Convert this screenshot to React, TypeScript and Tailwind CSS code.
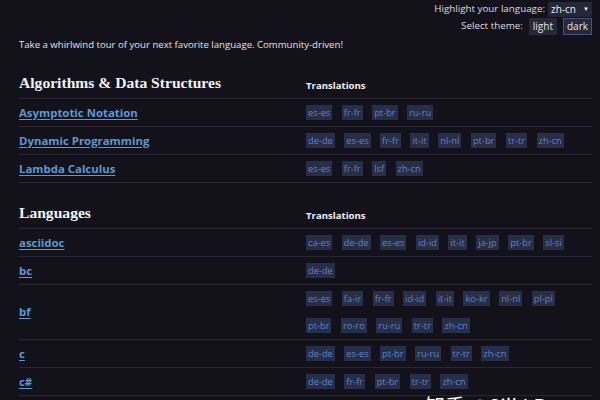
import React from "react";

type Row = { name: string; lines: string[][] };

const algorithms: Row[] = [
  { name: "Asymptotic Notation", lines: [["es-es", "fr-fr", "pt-br", "ru-ru"]] },
  {
    name: "Dynamic Programming",
    lines: [["de-de", "es-es", "fr-fr", "it-it", "nl-nl", "pt-br", "tr-tr", "zh-cn"]],
  },
  { name: "Lambda Calculus", lines: [["es-es", "fr-fr", "lsf", "zh-cn"]] },
];

const languages: Row[] = [
  {
    name: "asciidoc",
    lines: [["ca-es", "de-de", "es-es", "id-id", "it-it", "ja-jp", "pt-br", "sl-si"]],
  },
  { name: "bc", lines: [["de-de"]] },
  {
    name: "bf",
    lines: [
      ["es-es", "fa-ir", "fr-fr", "id-id", "it-it", "ko-kr", "nl-nl", "pl-pl"],
      ["pt-br", "ro-ro", "ru-ru", "tr-tr", "zh-cn"],
    ],
  },
  { name: "c", lines: [["de-de", "es-es", "pt-br", "ru-ru", "tr-tr", "zh-cn"]] },
  { name: "c#", lines: [["de-de", "fr-fr", "pt-br", "tr-tr", "zh-cn"]] },
];

function Section({ title, rows }: { title: string; rows: Row[] }) {
  return (
    <div className="mt-[20px] ml-[19px] mr-[8px]">
      {/* heading row */}
      <div className="grid grid-cols-[287px_1fr] items-end pb-[5px] border-b border-[#262634]">
        <h2 className="font-['Liberation_Serif',serif] font-bold text-[15.6px] leading-[20px] text-[#f2f2f2]">
          {title}
        </h2>
        <div className="text-[9.6px] font-bold leading-[14px] text-[#f0f0f0]">
          Translations
        </div>
      </div>
      {rows.map((row) => (
        <div
          key={row.name}
          className="grid grid-cols-[287px_1fr] items-center border-b border-[#262634]"
        >
          <a className="text-[11.4px] font-bold leading-[16px] text-[#5a98d6] underline underline-offset-2 w-fit">
            {row.name}
          </a>
          <div className="flex flex-col gap-y-[12px] py-[6px]">
            {row.lines.map((line, i) => (
              <div key={i} className="flex gap-x-[9.5px] whitespace-nowrap">
                {line.map((tag) => (
                  <span
                    key={tag}
                    className="inline-flex items-center h-[15px] px-[2px] bg-[#282d48] text-[9.3px] leading-none text-[#5487c8]"
                  >
                    {tag}
                  </span>
                ))}
              </div>
            ))}
          </div>
        </div>
      ))}
    </div>
  );
}

export default function App() {
  return (
    <div className="relative w-[600px] h-[400px] overflow-hidden bg-[#13121a] font-['Open_Sans',sans-serif] text-[#dddddd]">
      {/* language + theme controls */}
      <div className="flex flex-col items-end gap-[1px] pt-[2px] pr-[8px] text-[9.8px]">
        <div className="flex items-center gap-[3px]">
          <span>Highlight your language:</span>
          <span className="flex items-center justify-between w-[44px] h-[15px] px-[3px] bg-[#262839] text-[10px] text-[#eeeeee]">
            zh-cn <span className="text-[6px]">▼</span>
          </span>
        </div>
        <div className="flex items-center gap-[6px]">
          <span>Select theme:</span>
          <span className="h-[17px] px-[4px] flex items-center bg-[#25273a] text-[10px] text-[#e6e6e6]">
            light
          </span>
          <span className="h-[17px] px-[3px] flex items-center bg-[#25273a] border border-[#46527c] text-[10px] text-[#e6e6e6]">
            dark
          </span>
        </div>
      </div>

      <p className="mt-[2px] pl-[19px] text-[9.6px] leading-[16px] text-[#e2e2e2]">
        Take a whirlwind tour of your next favorite language. Community-driven!
      </p>

      <Section title="Algorithms & Data Structures" rows={algorithms} />
      <Section title="Languages" rows={languages} />

      {/* watermark */}
      <div className="absolute left-[425px] top-[391px] text-[20px] font-['Noto_Sans_CJK_SC',sans-serif] text-white whitespace-nowrap">
        知乎 @SilkLB
      </div>
    </div>
  );
}
